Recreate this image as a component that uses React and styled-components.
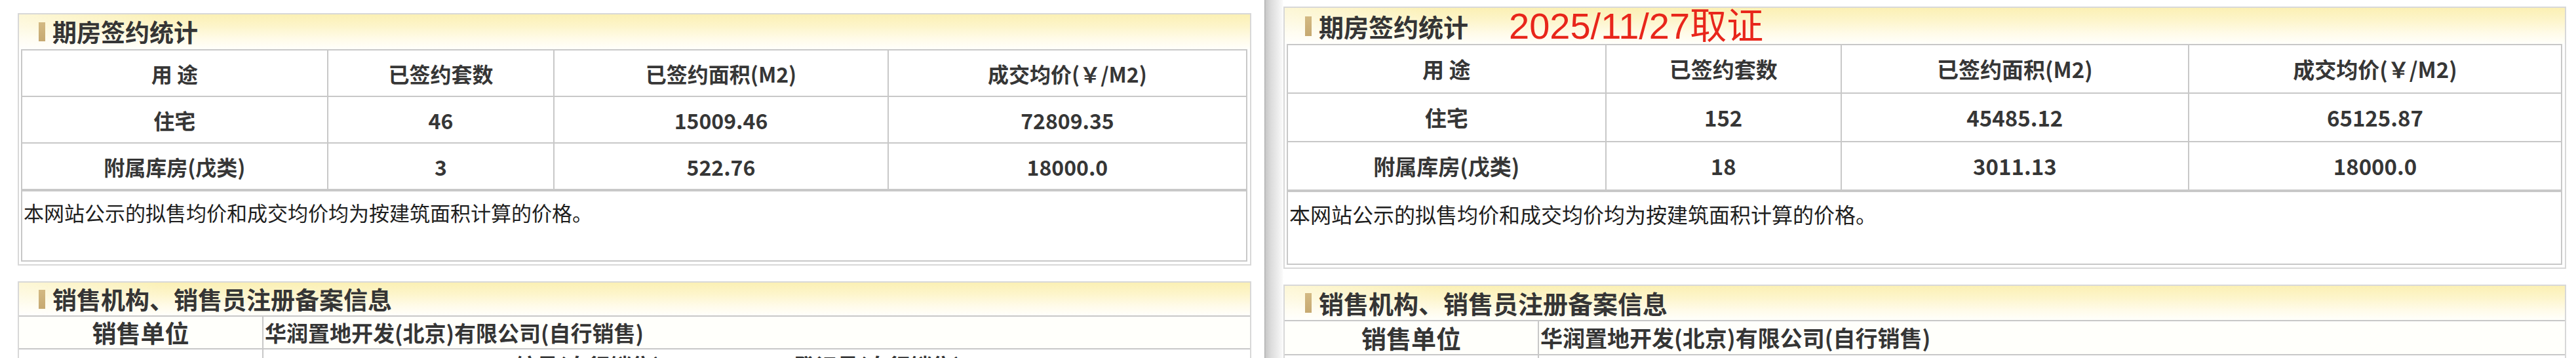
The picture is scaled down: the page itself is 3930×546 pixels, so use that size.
import styled, { createGlobalStyle } from 'styled-components';

const GlobalStyle = createGlobalStyle`
  html, body {
    margin: 0;
    padding: 0;
    background: #fff;
  }
  body {
    width: 3930px;
    height: 546px;
    overflow: hidden;
    font-family: "Noto Sans CJK SC", "Noto Sans", sans-serif;
    color: #333;
  }
`;

const px = (v, s) => `${Math.round(v * s)}px`;

const Screen = styled.div`
  display: flex;
  width: 3930px;
  height: 546px;
  overflow: hidden;
`;

const Page = styled.div`
  box-sizing: border-box;
  flex: none;
  width: ${p => p.$w}px;
  height: 546px;
  padding: ${p => p.$pad};
  display: flex;
  flex-direction: column;
  gap: 24px;
  background: ${p => p.$shade
    ? 'linear-gradient(to right, #a8a8a8 0, #c9c9c9 2px, #dcdcdc 10px, #ececec 20px, #f8f8f8 27px, #fff 29px)'
    : '#fff'};
`;

const Box = styled.section`
  flex: none;
  border: 2px solid #d8d8d8;
  background: #fff;
`;

const Head = styled.div`
  height: ${p => px(p.$h, p.$s)};
  display: flex;
  align-items: center;
  padding-left: ${p => px(30, p.$s)};
  background:
    linear-gradient(to right, rgba(255, 255, 255, 0.45), rgba(255, 255, 255, 0) 12%),
    linear-gradient(to bottom, #fbf0b4 0%, #fdf5cb 35%, #fffbe8 70%, #fffffb 100%);
`;

const Bar = styled.span`
  width: ${p => px(9.5, p.$s)};
  height: ${p => px(29, p.$s)};
  background: linear-gradient(to bottom, #d3b983, #c6a971);
  margin-right: ${p => px(11, p.$s)};
`;

const Title = styled.h2`
  margin: 0;
  font-size: ${p => px(37, p.$s)};
  font-weight: 700;
  line-height: 1;
  color: #353535;
  white-space: nowrap;
`;

const Stamp = styled.span`
  margin-left: 62px;
  font-family: "Liberation Sans", "Noto Sans CJK SC", sans-serif;
  font-size: 56px;
  line-height: 1;
  color: #e8261b;
  white-space: nowrap;
`;

const Body = styled.div`
  padding: 0 4px 4px 3px;
`;

const Grid = styled.div`
  display: grid;
  grid-template-columns: 25% 18.5% 27.3% 1fr;
  border: 2px solid #c8c8c8;
  border-bottom: none;
`;

const Cell = styled.div`
  box-sizing: border-box;
  height: ${p => px(71, p.$s)};
  display: flex;
  align-items: center;
  justify-content: center;
  border-bottom: 2px solid #c8c8c8;
  border-right: ${p => (p.$last ? 'none' : '2px solid #c8c8c8')};
  font-size: ${p => px(32, p.$s)};
  font-weight: 700;
  line-height: 1;
  color: #363636;
  white-space: nowrap;
`;

const Note = styled.div`
  box-sizing: border-box;
  height: ${p => px(109, p.$s)};
  border: 2px solid #c8c8c8;
  padding: ${p => px(13, p.$s)} 2px 0;
  font-size: ${p => px(31, p.$s)};
  line-height: 1.2;
  color: #1e1e1e;
  white-space: nowrap;
`;

const InfoRow = styled.div`
  display: grid;
  grid-template-columns: ${p => px(373, p.$s)} 1fr;
  border-top: ${p => (p.$first ? '2px solid #c8c8c8' : 'none')};
  background: ${p => (p.$first ? '#fffffb' : '#fff')};
`;

const Label = styled.div`
  box-sizing: border-box;
  height: ${p => px(50, p.$s)};
  display: flex;
  align-items: center;
  justify-content: center;
  border-right: 2px solid #c8c8c8;
  border-bottom: 2px solid #c8c8c8;
  font-size: ${p => px(37, p.$s)};
  font-weight: 700;
  line-height: 1;
  color: #353535;
`;

const Value = styled.div`
  box-sizing: border-box;
  height: ${p => px(50, p.$s)};
  display: flex;
  align-items: center;
  justify-content: ${p => (p.$center ? 'center' : 'flex-start')};
  padding-left: 2px;
  border-bottom: 2px solid #c8c8c8;
  font-size: ${p => px(33, p.$s)};
  font-weight: 700;
  line-height: 1;
  color: #353535;
  white-space: nowrap;
`;

const heads = ['用 途', '已签约套数', '已签约面积(M2)', '成交均价(￥/M2)'];

const pages = [
  {
    key: 'left',
    w: 1929,
    pad: '20px 20px 0 27px',
    s: 1,
    rows: [
      ['住宅', '46', '15009.46', '72809.35'],
      ['附属库房(戊类)', '3', '522.76', '18000.0'],
    ],
  },
  {
    key: 'right',
    w: 2001,
    pad: '10px 15px 0 29px',
    s: 1.04,
    shade: true,
    stamp: '2025/11/27取证',
    rows: [
      ['住宅', '152', '45485.12', '65125.87'],
      ['附属库房(戊类)', '18', '3011.13', '18000.0'],
    ],
  },
];

function Stats({ s, stamp, rows }) {
  return (
    <Box>
      <Head $h={53} $s={s}>
        <Bar $s={s} />
        <Title $s={s}>期房签约统计</Title>
        {stamp && <Stamp>{stamp}</Stamp>}
      </Head>
      <Body>
        <Grid>
          {[heads, ...rows].map((r, i) =>
            r.map((t, j) => (
              <Cell key={i + '-' + j} $s={s} $last={j === 3}>{t}</Cell>
            ))
          )}
        </Grid>
        <Note $s={s}>本网站公示的拟售均价和成交均价均为按建筑面积计算的价格。</Note>
      </Body>
    </Box>
  );
}

function Sales({ s }) {
  return (
    <Box>
      <Head $h={50} $s={s}>
        <Bar $s={s} />
        <Title $s={s}>销售机构、销售员注册备案信息</Title>
      </Head>
      <InfoRow $s={s} $first>
        <Label $s={s}>销售单位</Label>
        <Value $s={s}>华润置地开发(北京)有限公司(自行销售)</Value>
      </InfoRow>
      <InfoRow $s={s}>
        <Label $s={s} />
        <Value $s={s} $center>编号(自行销售)0000007　　登记号(自行销售)007</Value>
      </InfoRow>
    </Box>
  );
}

export default function App() {
  return (
    <>
      <GlobalStyle />
      <Screen>
        {pages.map(p => (
          <Page key={p.key} $w={p.w} $pad={p.pad} $shade={p.shade}>
            <Stats s={p.s} stamp={p.stamp} rows={p.rows} />
            <Sales s={p.s} />
          </Page>
        ))}
      </Screen>
    </>
  );
}
